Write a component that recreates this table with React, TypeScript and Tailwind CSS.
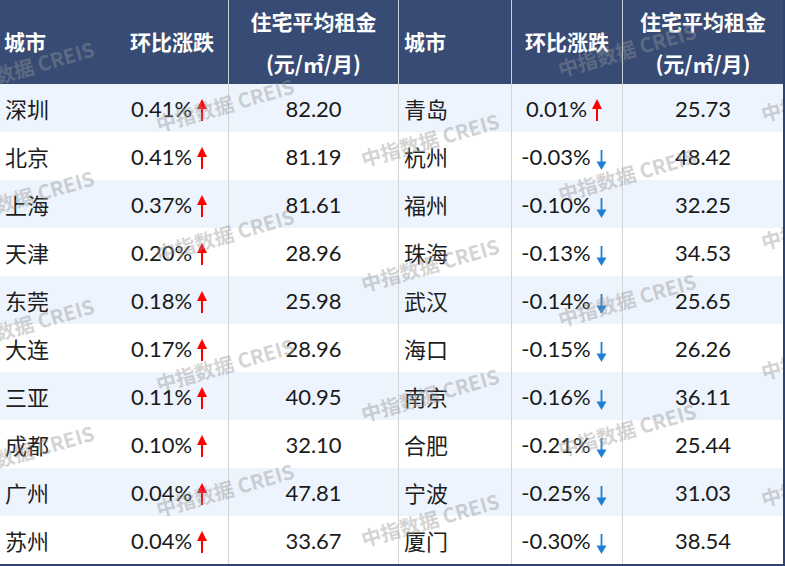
import React from 'react';

type Row = {
    city: string,
    change: string,
    rent: string,
};

const leftRows: Row[] = [
    {city: '深圳', change: '0.41%', rent: '82.20'},
    {city: '北京', change: '0.41%', rent: '81.19'},
    {city: '上海', change: '0.37%', rent: '81.61'},
    {city: '天津', change: '0.20%', rent: '28.96'},
    {city: '东莞', change: '0.18%', rent: '25.98'},
    {city: '大连', change: '0.17%', rent: '28.96'},
    {city: '三亚', change: '0.11%', rent: '40.95'},
    {city: '成都', change: '0.10%', rent: '32.10'},
    {city: '广州', change: '0.04%', rent: '47.81'},
    {city: '苏州', change: '0.04%', rent: '33.67'},
];

const rightRows: Row[] = [
    {city: '青岛', change: '0.01%', rent: '25.73'},
    {city: '杭州', change: '-0.03%', rent: '48.42'},
    {city: '福州', change: '-0.10%', rent: '32.25'},
    {city: '珠海', change: '-0.13%', rent: '34.53'},
    {city: '武汉', change: '-0.14%', rent: '25.65'},
    {city: '海口', change: '-0.15%', rent: '26.26'},
    {city: '南京', change: '-0.16%', rent: '36.11'},
    {city: '合肥', change: '-0.21%', rent: '25.44'},
    {city: '宁波', change: '-0.25%', rent: '31.03'},
    {city: '厦门', change: '-0.30%', rent: '38.54'},
];

// watermark centres, read off the screenshot
const marks: [number, number][] = [
    [25, 68], [25, 197], [25, 325], [25, 452],
    [225, 105], [225, 235], [225, 365], [225, 490],
    [430, 140], [430, 265], [430, 395], [430, 520],
    [627, 50], [627, 175], [627, 300], [627, 430],
    [830, 95], [830, 223], [830, 353], [830, 480],
];

const UpArrow = () => (
    <svg width="10" height="22" viewBox="0 0 10 22" className="shrink-0 translate-y-[2px]">
        <polygon points="5,0 10,10 0,10" fill="#ff0000"/>
        <rect x="4" y="8" width="2" height="14" fill="#ff0000"/>
    </svg>
);

const DownArrow = () => (
    <svg width="11" height="20" viewBox="0 0 11 20" className="shrink-0 translate-y-[4px]">
        <rect x="4.6" y="0" width="1.8" height="13" fill="#1f7fd0"/>
        <polygon points="0.5,11.5 10.5,11.5 5.5,20" fill="#1f7fd0"/>
    </svg>
);

const ChangeCell = ({value, border}: { value: string, border: boolean }) => (
    <div className={"flex items-center justify-center gap-[5px] pr-[6px] " + (border ? "border-l border-[#d4d4d4]" : "")}>
        <span className="font-['Lato','Noto_Sans_CJK_SC',sans-serif] text-[22px] text-[#1a1a1a]">{value}</span>
        {value.startsWith('-') ? <DownArrow/> : <UpArrow/>}
    </div>
);

const App = () => {
    return (
        <div className="relative w-[785px] h-[566px] overflow-hidden bg-white border-r-2 border-b-2 border-[#2f4470] font-['Noto_Sans_CJK_SC',sans-serif]">
            <div className="grid grid-cols-[116px_112px_170px_113px_111px_1fr] h-[84px] bg-[#374b74] text-white font-bold text-[21px]">
                <div className="flex items-center pl-[4px]">城市</div>
                <div className="flex items-center justify-center">环比涨跌</div>
                <div className="flex flex-col items-center justify-center gap-[8px] leading-[34px] border-l border-[#c9cfdb]">
                    <span>住宅平均租金</span>
                    <span>(元/㎡/月)</span>
                </div>
                <div className="flex items-center pl-[5px] border-l border-[#c9cfdb]">城市</div>
                <div className="flex items-center justify-center border-l border-[#c9cfdb]">环比涨跌</div>
                <div className="flex flex-col items-center justify-center gap-[8px] leading-[34px] border-l border-[#c9cfdb]">
                    <span>住宅平均租金</span>
                    <span>(元/㎡/月)</span>
                </div>
            </div>
            {leftRows.map((row, i) => {
                const r = rightRows[i];
                return (
                    <div key={row.city}
                         className={"grid grid-cols-[116px_112px_170px_113px_111px_1fr] h-[48px] " + (i % 2 === 0 ? "bg-[#edf4fd]" : "bg-white")}>
                        <div className="flex items-center pl-[5px] text-[22px] text-[#1e1e1e]">{row.city}</div>
                        <ChangeCell value={row.change} border={false}/>
                        <div className="flex items-center justify-center border-l border-[#d4d4d4] font-['Lato',sans-serif] text-[22px] text-[#1a1a1a]">{row.rent}</div>
                        <div className="flex items-center pl-[5px] border-l border-[#d4d4d4] text-[22px] text-[#1e1e1e]">{r.city}</div>
                        <ChangeCell value={r.change} border={true}/>
                        <div className="flex items-center justify-center border-l border-[#d4d4d4] font-['Lato',sans-serif] text-[22px] text-[#1a1a1a]">{r.rent}</div>
                    </div>
                );
            })}
            {marks.map(([x, y]) => (
                <span key={x + '-' + y}
                      className="pointer-events-none absolute whitespace-nowrap -translate-x-1/2 -translate-y-1/2 -rotate-[16deg] font-bold text-[20px] text-[rgba(150,150,150,0.42)]"
                      style={{left: x, top: y}}>
                    中指数据 CREIS
                </span>
            ))}
        </div>
    );
};

export default App;
